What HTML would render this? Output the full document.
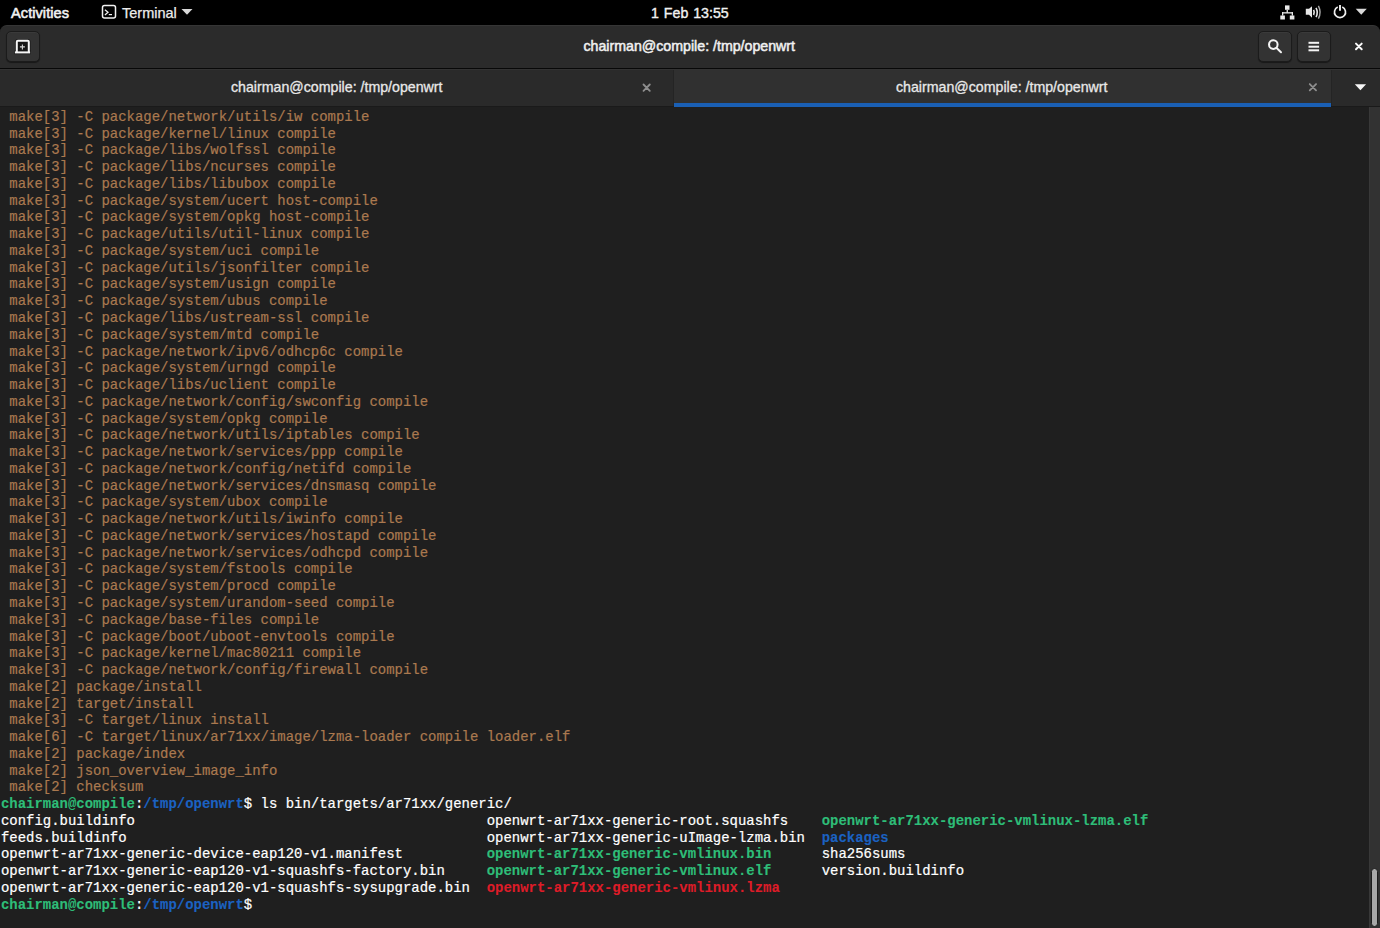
<!DOCTYPE html>
<html><head><meta charset="utf-8">
<style>
*{margin:0;padding:0;box-sizing:border-box}
html,body{width:1380px;height:928px;overflow:hidden;background:#000}
body{position:relative;font-family:"Liberation Sans",sans-serif}
.abs{position:absolute}
.t{position:absolute;white-space:nowrap;line-height:1}
svg{position:absolute;left:0;top:0;overflow:visible}
.topbar{position:absolute;left:0;top:0;width:1380px;height:25px;background:#000;color:#f2f2f2}
.hdr{position:absolute;left:0;top:25px;width:1380px;height:44px;background:#2b2b2b;border-top:1px solid #353535;border-bottom:1px solid #080808;border-radius:7px 7px 0 0}
.btn{position:absolute;top:5px;width:34px;height:31px;background:#333;border:1px solid #1b1b1b;border-radius:5px;box-shadow:0 1px 1px rgba(0,0,0,.45),inset 0 1px 0 #3a3a3a}
.tabs{position:absolute;left:0;top:69px;width:1380px;height:38px;background:#2a2a2a;border-top:1px solid #333;border-bottom:1px solid #1a1a1a}
.term{position:absolute;left:0;top:107px;width:1369px;height:821px;background:#1f1f1f}
.sb{position:absolute;left:1369px;top:107px;width:11px;height:821px;background:#323232;border-left:1px solid #383838}
.thumb{position:absolute;left:1px;top:761px;width:7px;height:59px;background:#a8a8a8;border:1px solid #1c1c1c;border-radius:4px}
.txt{position:absolute;left:1px;top:1.8px;font-family:"Liberation Mono",monospace;font-size:13.96px;line-height:16.75px;white-space:pre;-webkit-text-stroke:0.2px currentColor}
.l{position:absolute;left:0;height:16.75px;white-space:pre}
.c{position:absolute;top:0}
.y{color:#aa794f}
.w{color:#fff}
b{font-weight:bold;-webkit-text-stroke:0.1px currentColor}
.g{color:#2ebd78}
.bl{color:#1b62c2}
.r{color:#de1c28}
</style></head><body>
<div class="topbar">
  <div class="t" style="left:11px;top:5.5px;font-size:14.6px;-webkit-text-stroke:0.55px #f2f2f2;letter-spacing:0.05px">Activities</div>
  <div class="t" style="left:122px;top:6px;font-size:14.5px;color:#ececec;-webkit-text-stroke:0.25px #ececec">Terminal</div>
  <div class="t" style="left:651px;top:6px;font-size:14.2px;-webkit-text-stroke:0.35px #f2f2f2;word-spacing:1px">1 Feb 13:55</div>
  <svg width="1380" height="25">
    <g fill="none" stroke="#f0f0f0" stroke-width="1.5">
      <rect x="102.5" y="5.5" width="13" height="12.5" rx="2"/>
      <path d="M104.9 9.7 L108 12.3 L104.9 14.9" stroke-width="1.3"/>
      <path d="M108.8 14.6 H112" stroke-width="1.2"/>
    </g>
    <path d="M181.5 9 H192.5 L187 14.8 Z" fill="#d8d8d8"/>
    <g fill="#eaeaea">
      <rect x="1285" y="5.4" width="4.5" height="4.4"/>
      <rect x="1286.6" y="10" width="1.3" height="2.8"/>
      <rect x="1282" y="12.2" width="11" height="1.3"/>
      <rect x="1282" y="12.2" width="1.3" height="3.4"/>
      <rect x="1291.7" y="12.2" width="1.3" height="3.4"/>
      <rect x="1280.3" y="15.5" width="4.6" height="4"/>
      <rect x="1289.8" y="15.5" width="4.6" height="4"/>
    </g>
    <g fill="#e6e6e6">
      <path d="M1305.8 8.8 H1309 L1312 6.2 V17.8 L1309 14.8 H1305.8 Z"/>
    </g>
    <g fill="none" stroke="#e6e6e6" stroke-width="1.6">
      <path d="M1313.6 9.8 Q1315 12.4 1313.6 15"/>
      <path d="M1316 7.8 Q1318.6 12.4 1316 17"/>
      <path d="M1318.4 5.9 Q1321.8 12.4 1318.4 18.6" stroke="#a8a8a8" stroke-width="1.4"/>
    </g>
    <g fill="none" stroke="#f0f0f0" stroke-width="1.7">
      <path d="M1337.72 7.1 A5.55 5.55 0 1 0 1342.28 7.1"/>
      <path d="M1340 4.9 V10.8" stroke-width="1.9"/>
    </g>
    <path d="M1355.7 8.8 H1366.8 L1361.25 14.7 Z" fill="#d8d8d8"/>
  </svg>
</div>
<div class="hdr">
  <div class="btn" style="left:6px"></div>
  <div class="btn" style="left:1258px"></div>
  <div class="btn" style="left:1297px"></div>
  <div class="t" style="left:583.5px;top:13.3px;font-size:14.2px;color:#f0f0f0;-webkit-text-stroke:0.5px #f0f0f0">chairman@compile: /tmp/openwrt</div>
  <svg width="1380" height="44" style="top:-26px">
    <g>
      <path d="M16.8 52.5 V41.7 Q16.8 40.7 17.8 40.7 H27.8 Q28.8 40.7 28.8 41.7 V52.5" fill="#141414" stroke="#000" stroke-opacity=".45" stroke-width="3.6"/>
      <rect x="14.2" y="50.6" width="16.6" height="3.6" fill="#000" fill-opacity=".45"/>
      <path d="M16.8 52.5 V41.7 Q16.8 40.7 17.8 40.7 H27.8 Q28.8 40.7 28.8 41.7 V52.5" fill="#161616" stroke="#f6f6f6" stroke-width="2"/>
      <rect x="14.9" y="51.4" width="15.2" height="2" fill="#f6f6f6"/>
      <path d="M19.9 46.9 H24.9 M22.4 44.4 V49.4" stroke="#d8d8d8" stroke-width="1.1"/>
    </g>
    <g fill="none" stroke="#f4f4f4" stroke-width="2" stroke-linecap="round">
      <circle cx="1273.3" cy="44.6" r="4.3"/>
      <path d="M1276.6 48 L1281 52.2"/>
    </g>
    <g fill="#f4f4f4">
      <rect x="1308.5" y="41.8" width="10.6" height="2"/>
      <rect x="1308.5" y="45.7" width="10.6" height="2"/>
      <rect x="1308.5" y="49.3" width="10.6" height="2"/>
    </g>
    <g fill="none" stroke="#fafafa" stroke-width="2" stroke-linecap="round">
      <path d="M1356 43.6 L1361.7 49.3 M1361.7 43.6 L1356 49.3"/>
    </g>
  </svg>
</div>
<div class="tabs">
  <div class="abs" style="left:673px;top:0;width:659px;height:36px;background:#303030;border-left:1px solid #242424;border-right:1px solid #242424"></div>
  <div class="abs" style="left:674px;top:33px;width:657px;height:4px;background:#1a5fb4"></div>
  <div class="t" style="left:231px;top:10.3px;font-size:14.2px;color:#e8e8e8;-webkit-text-stroke:0.3px #e8e8e8">chairman@compile: /tmp/openwrt</div>
  <div class="t" style="left:896px;top:10.3px;font-size:14.2px;color:#e8e8e8;-webkit-text-stroke:0.3px #e8e8e8">chairman@compile: /tmp/openwrt</div>
  <svg width="1380" height="38" style="top:-70px">
    <g fill="none" stroke="#8e8e8e" stroke-width="1.8" stroke-linecap="round">
      <path d="M643.5 84.5 L649.8 90.8 M649.8 84.5 L643.5 90.8"/>
      <path d="M1309.75 84.05 L1316.05 90.35 M1316.05 84.05 L1309.75 90.35"/>
    </g>
    <path d="M1354.8 84.3 H1366.1 L1360.45 90.3 Z" fill="#f6f6f6"/>
  </svg>
</div>
<div class="term"><div class="txt">
<div class="l y" style="top:0.00px"> make[3] -C package/network/utils/iw compile</div>
<div class="l y" style="top:16.77px"> make[3] -C package/kernel/linux compile</div>
<div class="l y" style="top:33.53px"> make[3] -C package/libs/wolfssl compile</div>
<div class="l y" style="top:50.30px"> make[3] -C package/libs/ncurses compile</div>
<div class="l y" style="top:67.06px"> make[3] -C package/libs/libubox compile</div>
<div class="l y" style="top:83.83px"> make[3] -C package/system/ucert host-compile</div>
<div class="l y" style="top:100.59px"> make[3] -C package/system/opkg host-compile</div>
<div class="l y" style="top:117.36px"> make[3] -C package/utils/util-linux compile</div>
<div class="l y" style="top:134.12px"> make[3] -C package/system/uci compile</div>
<div class="l y" style="top:150.88px"> make[3] -C package/utils/jsonfilter compile</div>
<div class="l y" style="top:167.65px"> make[3] -C package/system/usign compile</div>
<div class="l y" style="top:184.42px"> make[3] -C package/system/ubus compile</div>
<div class="l y" style="top:201.18px"> make[3] -C package/libs/ustream-ssl compile</div>
<div class="l y" style="top:217.94px"> make[3] -C package/system/mtd compile</div>
<div class="l y" style="top:234.71px"> make[3] -C package/network/ipv6/odhcp6c compile</div>
<div class="l y" style="top:251.48px"> make[3] -C package/system/urngd compile</div>
<div class="l y" style="top:268.24px"> make[3] -C package/libs/uclient compile</div>
<div class="l y" style="top:285.00px"> make[3] -C package/network/config/swconfig compile</div>
<div class="l y" style="top:301.77px"> make[3] -C package/system/opkg compile</div>
<div class="l y" style="top:318.54px"> make[3] -C package/network/utils/iptables compile</div>
<div class="l y" style="top:335.30px"> make[3] -C package/network/services/ppp compile</div>
<div class="l y" style="top:352.06px"> make[3] -C package/network/config/netifd compile</div>
<div class="l y" style="top:368.83px"> make[3] -C package/network/services/dnsmasq compile</div>
<div class="l y" style="top:385.60px"> make[3] -C package/system/ubox compile</div>
<div class="l y" style="top:402.36px"> make[3] -C package/network/utils/iwinfo compile</div>
<div class="l y" style="top:419.12px"> make[3] -C package/network/services/hostapd compile</div>
<div class="l y" style="top:435.89px"> make[3] -C package/network/services/odhcpd compile</div>
<div class="l y" style="top:452.66px"> make[3] -C package/system/fstools compile</div>
<div class="l y" style="top:469.42px"> make[3] -C package/system/procd compile</div>
<div class="l y" style="top:486.19px"> make[3] -C package/system/urandom-seed compile</div>
<div class="l y" style="top:502.95px"> make[3] -C package/base-files compile</div>
<div class="l y" style="top:519.72px"> make[3] -C package/boot/uboot-envtools compile</div>
<div class="l y" style="top:536.48px"> make[3] -C package/kernel/mac80211 compile</div>
<div class="l y" style="top:553.25px"> make[3] -C package/network/config/firewall compile</div>
<div class="l y" style="top:570.01px"> make[2] package/install</div>
<div class="l y" style="top:586.77px"> make[2] target/install</div>
<div class="l y" style="top:603.54px"> make[3] -C target/linux install</div>
<div class="l y" style="top:620.31px"> make[6] -C target/linux/ar71xx/image/lzma-loader compile loader.elf</div>
<div class="l y" style="top:637.07px"> make[2] package/index</div>
<div class="l y" style="top:653.84px"> make[2] json_overview_image_info</div>
<div class="l y" style="top:670.60px"> make[2] checksum</div>
<div class="l w" style="top:687.37px"><b class="g">chairman@compile</b>:<b class="bl">/tmp/openwrt</b>$ ls bin/targets/ar71xx/generic/</div>
<div class="l w" style="top:704.13px"><span class="c" style="left:0px">config.buildinfo</span><span class="c" style="left:485.75px">openwrt-ar71xx-generic-root.squashfs</span><span class="c" style="left:820.75px"><b class="g">openwrt-ar71xx-generic-vmlinux-lzma.elf</b></span></div>
<div class="l w" style="top:720.89px"><span class="c" style="left:0px">feeds.buildinfo</span><span class="c" style="left:485.75px">openwrt-ar71xx-generic-uImage-lzma.bin</span><span class="c" style="left:820.75px"><b class="bl">packages</b></span></div>
<div class="l w" style="top:737.66px"><span class="c" style="left:0px">openwrt-ar71xx-generic-device-eap120-v1.manifest</span><span class="c" style="left:485.75px"><b class="g">openwrt-ar71xx-generic-vmlinux.bin</b></span><span class="c" style="left:820.75px">sha256sums</span></div>
<div class="l w" style="top:754.43px"><span class="c" style="left:0px">openwrt-ar71xx-generic-eap120-v1-squashfs-factory.bin</span><span class="c" style="left:485.75px"><b class="g">openwrt-ar71xx-generic-vmlinux.elf</b></span><span class="c" style="left:820.75px">version.buildinfo</span></div>
<div class="l w" style="top:771.19px"><span class="c" style="left:0px">openwrt-ar71xx-generic-eap120-v1-squashfs-sysupgrade.bin</span><span class="c" style="left:485.75px"><b class="r">openwrt-ar71xx-generic-vmlinux.lzma</b></span></div>
<div class="l w" style="top:787.96px"><b class="g">chairman@compile</b>:<b class="bl">/tmp/openwrt</b>$</div>
</div></div>
<div class="sb"><div class="thumb"></div></div>
</body></html>
